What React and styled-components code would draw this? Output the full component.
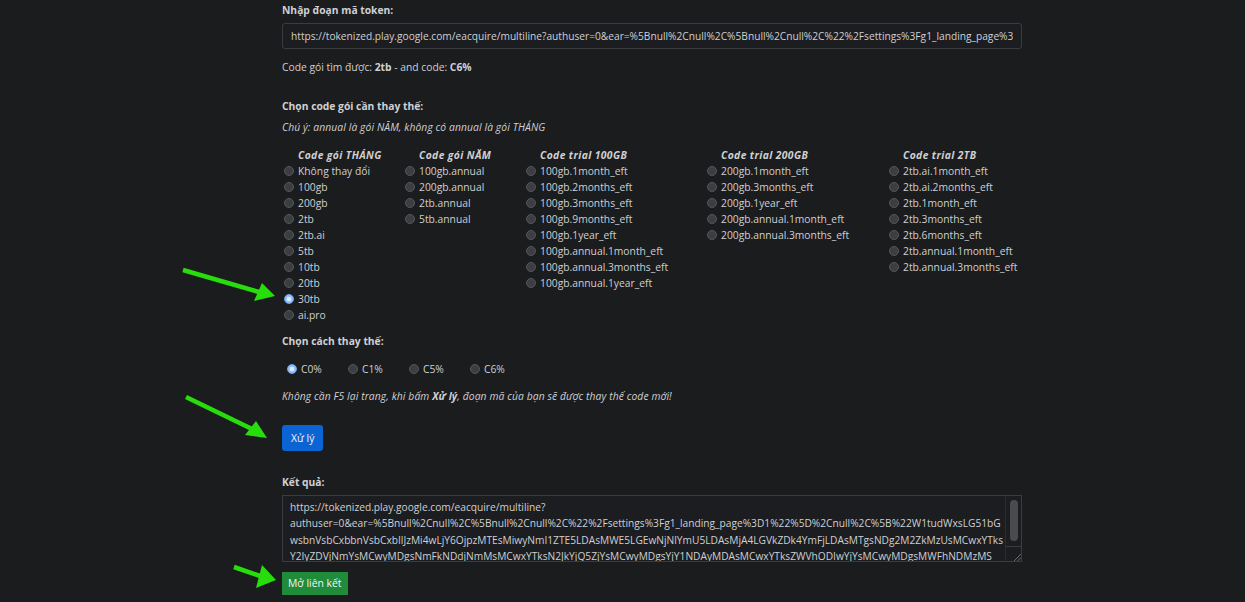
import React from "react";
import styled, { createGlobalStyle } from "styled-components";

const Global = createGlobalStyle`
  html, body { margin: 0; padding: 0; background: #1b1c1e; }
  body { font-family: "Open Sans", "Noto Sans", sans-serif; color: #cfd0d2; font-size: 10.3px; line-height: 16px; }
  * { box-sizing: border-box; }
`;

const Page = styled.div`
  position: relative;
  width: 1245px;
  height: 602px;
  overflow: hidden;
`;

const Column = styled.div`
  width: 740px;
  margin-left: 282px;
  padding-top: 2px;
  display: flex;
  flex-direction: column;
`;

const Label = styled.div`
  font-weight: 700;
  height: 16px;
  margin-top: ${(p) => p.$mt || 0}px;
`;

const Text = styled.div`
  height: 16px;
  margin-top: ${(p) => p.$mt || 0}px;
  font-style: ${(p) => (p.$italic ? "italic" : "normal")};
  letter-spacing: ${(p) => (p.$italic ? "0.1px" : "0")};
  b { font-weight: 700; }
`;

const TokenInput = styled.input`
  margin-top: 5px;
  height: 26px;
  width: 740px;
  background: #1c1d20;
  border: 1px solid #3b3c3f;
  border-radius: 3px;
  color: #cfd0d2;
  font: inherit;
  font-size: 10.2px;
  padding: 0 8px;
  outline: none;
`;

const Grid = styled.div`
  margin-top: 12px;
  display: grid;
  grid-template-columns: 121px 121px 181px 182px 135px;
  align-items: start;
`;

const Col = styled.div`
  display: flex;
  flex-direction: column;
`;

const ColHead = styled.div`
  font-weight: 700;
  font-style: italic;
  letter-spacing: 0.4px;
  height: 16px;
  padding-left: 16px;
  white-space: nowrap;
`;

const Option = styled.label`
  display: flex;
  align-items: center;
  height: 16px;
  padding-left: ${(p) => p.$pl ?? 2}px;
  width: ${(p) => (p.$w ? p.$w + "px" : "auto")};
  white-space: nowrap;
  gap: 4px;
`;

const Radio = styled.span`
  width: 10px;
  height: 10px;
  border-radius: 50%;
  flex: none;
  box-sizing: border-box;
  border: 1px solid ${(p) => (p.$on ? "#6ea6ec" : "#555659")};
  background: ${(p) =>
    p.$on
      ? "radial-gradient(circle, #dcebff 0 2px, #93bff5 2.6px)"
      : "#3d3e41"};
`;

const RadioRow = styled.div`
  display: flex;
  margin-top: 12px;
  padding-left: 3px;
`;

const Button = styled.button`
  align-self: flex-start;
  margin-top: ${(p) => p.$mt}px;
  height: ${(p) => p.$h}px;
  padding: 0 ${(p) => p.$px}px;
  border: none;
  border-radius: ${(p) => p.$r}px;
  background: ${(p) => p.$bg};
  color: #f2f5f8;
  font: inherit;
  font-size: 10.4px;
  line-height: 1;
`;

const ResultBox = styled.div`
  margin-top: 5px;
  height: 67px;
  border: 1px solid #3b3c3f;
  background: #1c1d20;
  display: flex;
`;

const ResultArea = styled.textarea`
  flex: 1;
  border: none;
  background: transparent;
  color: #cfd0d2;
  font: inherit;
  font-size: 10.2px;
  line-height: 16.3px;
  padding: 3px 7px;
  resize: none;
  overflow: hidden;
  white-space: pre;
  outline: none;
`;

const ScrollCol = styled.div`
  width: 16px;
  border-left: 1px solid #2c2d30;
  display: flex;
  flex-direction: column;
  align-items: center;
`;

const Thumb = styled.div`
  margin-top: 4px;
  width: 8px;
  height: 41px;
  border-radius: 4px;
  background: #4a4b4e;
`;

const Corner = styled.div`
  margin-top: auto;
  width: 15px;
  height: 15px;
  border-top: 1px solid #3b3c3f;
  background: #1c1d20;
  display: flex;
  align-items: flex-end;
  justify-content: flex-end;
`;

const Overlay = styled.svg`
  position: absolute;
  left: 0;
  top: 0;
  pointer-events: none;
`;

const TOKEN =
  "https://tokenized.play.google.com/eacquire/multiline?authuser=0&ear=%5Bnull%2Cnull%2C%5Bnull%2Cnull%2C%22%2Fsettings%3Fg1_landing_page%3D1%22%5D%2Cnull%2C%5B%22W1tudWxsLG51bG";

const RESULT = [
  "https://tokenized.play.google.com/eacquire/multiline?",
  "authuser=0&ear=%5Bnull%2Cnull%2C%5Bnull%2Cnull%2C%22%2Fsettings%3Fg1_landing_page%3D1%22%5D%2Cnull%2C%5B%22W1tudWxsLG51bG",
  "wsbnVsbCxbbnVsbCxbIlJzMi4wLjY6OjpzMTEsMiwyNmI1ZTE5LDAsMWE5LGEwNjNlYmU5LDAsMjA4LGVkZDk4YmFjLDAsMTgsNDg2M2ZkMzUsMCwxYTks",
  "Y2IyZDVjNmYsMCwyMDgsNmFkNDdjNmMsMCwxYTksN2JkYjQ5ZjYsMCwyMDgsYjY1NDAyMDAsMCwxYTksZWVhODIwYjYsMCwyMDgsMWFhNDMzMS",
  "wxYTksMzQ5ZjRkZjAsMCwyMDgsNWE3YjJjNjAsMCwxYTksZjE2MmFhYzQsMCwyMDgsOTg3YjQ1ZDYsMCwxYTksYjI3ZDljNWIsMCwyMDgsM2M1",
].join("\n");

const columns = [
  {
    title: "Code gói THÁNG",
    items: ["Không thay đổi", "100gb", "200gb", "2tb", "2tb.ai", "5tb", "10tb", "20tb", "30tb", "ai.pro"],
    checked: "30tb",
  },
  { title: "Code gói NĂM", items: ["100gb.annual", "200gb.annual", "2tb.annual", "5tb.annual"] },
  {
    title: "Code trial 100GB",
    items: [
      "100gb.1month_eft",
      "100gb.2months_eft",
      "100gb.3months_eft",
      "100gb.9months_eft",
      "100gb.1year_eft",
      "100gb.annual.1month_eft",
      "100gb.annual.3months_eft",
      "100gb.annual.1year_eft",
    ],
  },
  {
    title: "Code trial 200GB",
    items: [
      "200gb.1month_eft",
      "200gb.3months_eft",
      "200gb.1year_eft",
      "200gb.annual.1month_eft",
      "200gb.annual.3months_eft",
    ],
  },
  {
    title: "Code trial 2TB",
    items: [
      "2tb.ai.1month_eft",
      "2tb.ai.2months_eft",
      "2tb.1month_eft",
      "2tb.3months_eft",
      "2tb.6months_eft",
      "2tb.annual.1month_eft",
      "2tb.annual.3months_eft",
    ],
  },
];

const methods = ["C0%", "C1%", "C5%", "C6%"];

function Arrow({ x1, y1, x2, y2, tip, a, b }) {
  return (
    <g>
      <line x1={x1} y1={y1} x2={x2} y2={y2} stroke="#27de0c" strokeWidth="4.5" strokeLinecap="butt" />
      <polygon points={`${tip[0]},${tip[1]} ${a[0]},${a[1]} ${b[0]},${b[1]}`} fill="#27de0c" />
    </g>
  );
}

export default function App() {
  return (
    <Page>
      <Global />
      <Column>
        <Label>Nhập đoạn mã token:</Label>
        <TokenInput readOnly value={TOKEN} />
        <Text $mt={10}>
          Code gói tìm được: <b>2tb</b> - and code: <b>C6%</b>
        </Text>
        <Label $mt={23}>Chọn code gói cần thay thế:</Label>
        <Text $mt={5} $italic>
          Chú ý: annual là gói NĂM, không có annual là gói THÁNG
        </Text>
        <Grid>
          {columns.map((c) => (
            <Col key={c.title}>
              <ColHead>{c.title}</ColHead>
              {c.items.map((it) => (
                <Option key={it}>
                  <Radio $on={c.checked === it} />
                  {it}
                </Option>
              ))}
            </Col>
          ))}
        </Grid>
        <Label $mt={10}>Chọn cách thay thế:</Label>
        <RadioRow>
          {methods.map((m, i) => (
            <Option key={m} $w={61} $pl={2}>
              <Radio $on={i === 0} />
              {m}
            </Option>
          ))}
        </RadioRow>
        <Text $mt={11} $italic>
          Không cần F5 lại trang, khi bấm <b>Xử lý</b>, đoạn mã của bạn sẽ được thay thế code mới!
        </Text>
        <Button $mt={21} $h={26} $px={9} $r={3} $bg="#0a64d4">
          Xử lý
        </Button>
        <Label $mt={23}>Kết quả:</Label>
        <ResultBox>
          <ResultArea readOnly value={RESULT} />
          <ScrollCol>
            <Thumb />
            <Corner>
              <svg width="10" height="10" viewBox="0 0 10 10">
                <line x1="3" y1="10" x2="10" y2="3" stroke="#6a6b6e" strokeWidth="1" />
                <line x1="6.5" y1="10" x2="10" y2="6.5" stroke="#6a6b6e" strokeWidth="1" />
              </svg>
            </Corner>
          </ScrollCol>
        </ResultBox>
        <Button $mt={10} $h={23} $px={6} $r={0} $bg="#1f8b3b">
          Mở liên kết
        </Button>
      </Column>
      <Overlay width="1245" height="602" viewBox="0 0 1245 602">
        <Arrow x1={183} y1={270} x2={259} y2={292} tip={[275, 296]} a={[254, 301]} b={[262, 283]} />
        <Arrow x1={186} y1={397} x2={252} y2={429} tip={[267, 438]} a={[245, 435]} b={[256, 421]} />
        <Arrow x1={234} y1={567} x2={260} y2={576} tip={[276, 580]} a={[256, 588]} b={[262, 565]} />
      </Overlay>
    </Page>
  );
}
